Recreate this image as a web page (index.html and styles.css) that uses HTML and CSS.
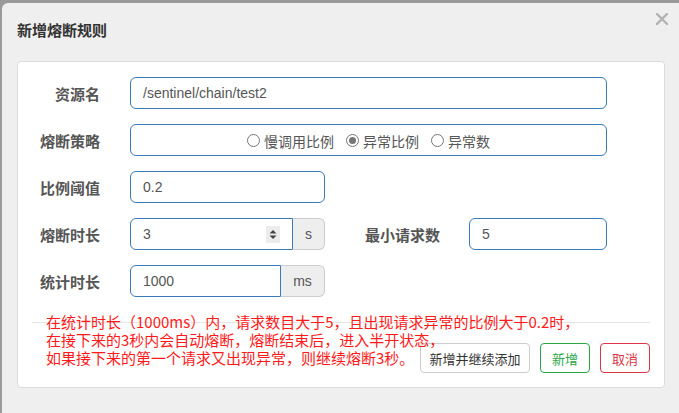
FILE: index.html
```html
<!DOCTYPE html>
<html lang="zh-CN">
<head>
<meta charset="utf-8">
<title>新增熔断规则</title>
<link rel="stylesheet" href="styles.css">
</head>
<body>
<div class="modal">
  <div class="modal-header">
    <h4 class="title">新增熔断规则</h4>
    <span class="close"><svg width="12" height="12" viewBox="0 0 12 12"><path d="M1 1L11 11M11 1L1 11" stroke="#b3b3b3" stroke-width="2.4" stroke-linecap="square"/></svg></span>
  </div>
  <div class="panel">
    <div class="form">
      <div class="row">
        <span class="lbl">资源名</span>
        <div class="ctl w-full">/sentinel/chain/test2</div>
      </div>
      <div class="row">
        <span class="lbl">熔断策略</span>
        <div class="ctl w-full radios">
          <span class="radio"><i class="dot"></i>慢调用比例</span>
          <span class="radio"><i class="dot on"></i>异常比例</span>
          <span class="radio"><i class="dot"></i>异常数</span>
        </div>
      </div>
      <div class="row">
        <span class="lbl">比例阈值</span>
        <div class="ctl w-half">0.2</div>
      </div>
      <div class="row">
        <span class="lbl">熔断时长</span>
        <div class="group">
          <div class="ctl in-group spin">3
            <svg class="spinner" width="14" height="17" viewBox="0 0 14 17"><rect width="14" height="17" fill="#ececec"/><path d="M3.5 7.5L7 4L10.5 7.5Z" fill="#444"/><path d="M3.5 9.5L7 13L10.5 9.5Z" fill="#444"/></svg>
          </div>
          <div class="addon addon-s">s</div>
        </div>
        <span class="lbl lbl2">最小请求数</span>
        <div class="ctl w-min">5</div>
      </div>
      <div class="row">
        <span class="lbl">统计时长</span>
        <div class="group">
          <div class="ctl in-group">1000</div>
          <div class="addon addon-ms">ms</div>
        </div>
      </div>
    </div>
    <div class="footer">
      <p class="hint">在统计时长（1000ms）内，请求数目大于5，且出现请求异常的比例大于0.2时，<br>在接下来的3秒内会自动熔断，熔断结束后，进入半开状态，<br>如果接下来的第一个请求又出现异常，则继续熔断3秒。</p>
      <button class="btn btn-default">新增并继续添加</button>
      <button class="btn btn-ok">新增</button>
      <button class="btn btn-cancel">取消</button>
    </div>
  </div>
</div>
</body>
</html>
```
FILE: styles.css
```css
html, body {
  margin: 0;
  padding: 0;
}
body {
  background: #9a9a9a;
  overflow: hidden;
  height: 413px;
  font-family: "Noto Sans CJK SC", "Liberation Sans", sans-serif;
}
.modal {
  margin: 3px 0 0 2px;
  width: 678px;
  height: 420px;
  box-sizing: border-box;
  padding: 0 15px;
  background: #efefef;
  border-radius: 6px 0 0 0;
}
.modal-header {
  display: flex;
  align-items: center;
  height: 54px;
}
.title {
  margin: 0;
  font-size: 15px;
  font-weight: bold;
  color: #333;
  line-height: 20px;
}
.close {
  margin-left: auto;
  margin-right: -3px;
  align-self: flex-start;
  margin-top: 10px;
  display: flex;
}
.panel {
  margin-top: 4px;
  background: #fff;
  border: 1px solid #dcdcdc;
  border-radius: 4px;
  padding: 15px 0 14px;
}
.form {
  display: flex;
  flex-direction: column;
  gap: 15px;
}
.row {
  display: flex;
  align-items: center;
  height: 32px;
}
.lbl {
  width: 82px;
  margin-right: 30px;
  text-align: right;
  font-size: 15px;
  font-weight: bold;
  color: #555;
  white-space: nowrap;
}
.lbl2 {
  width: 115px;
  margin-right: 29px;
}
.ctl {
  height: 32px;
  box-sizing: border-box;
  border: 1px solid #3a7ab8;
  border-radius: 6px;
  padding: 0 12px;
  display: flex;
  align-items: center;
  font-family: "Liberation Sans", Arial, sans-serif;
  font-size: 14px;
  color: #555;
}
.w-full { width: 477px; }
.w-half { width: 195px; }
.w-min { width: 138px; }
.group {
  display: flex;
  width: 195px;
}
.in-group {
  flex: 1;
  border-radius: 6px 0 0 6px;
}
.spin {
  justify-content: space-between;
}
.addon {
  height: 32px;
  box-sizing: border-box;
  border: 1px solid #ccc;
  border-left: none;
  border-radius: 0 6px 6px 0;
  background: #eee;
  display: flex;
  align-items: center;
  justify-content: center;
  font-family: "Liberation Sans", Arial, sans-serif;
  font-size: 14px;
  color: #555;
}
.addon-s { width: 32px; }
.addon-ms { width: 44px; }
.radios {
  justify-content: center;
  gap: 12px;
  font-family: "Noto Sans CJK SC", sans-serif;
  font-size: 14px;
  color: #555;
  padding-top: 1px;
}
.radio {
  display: flex;
  align-items: center;
  gap: 4px;
}
.dot {
  width: 11px;
  height: 11px;
  border: 1px solid #767676;
  border-radius: 50%;
  display: inline-flex;
  align-items: center;
  justify-content: center;
  box-sizing: content-box;
}
.dot.on::after {
  content: "";
  width: 7px;
  height: 7px;
  border-radius: 50%;
  background: #767676;
}
.footer {
  position: relative;
  margin: 25px 14px 0;
  border-top: 1px solid #e5e5e5;
  padding-top: 20px;
  display: flex;
  justify-content: flex-end;
  gap: 10px;
}
.hint {
  position: absolute;
  top: -10px;
  left: 14px;
  margin: 0;
  font-size: 15px;
  line-height: 18px;
  color: #ff1a1a;
  white-space: nowrap;
}
.btn {
  height: 30px;
  box-sizing: border-box;
  border: 1px solid #ccc;
  border-radius: 4px;
  background: #fff;
  font-family: "Noto Sans CJK SC", sans-serif;
  font-size: 13px;
  padding: 0;
  color: #333;
}
.btn-default { width: 110px; }
.btn-ok { width: 50px; border-color: #28a745; color: #28a745; }
.btn-cancel { width: 50px; border-color: #dc3545; color: #dc3545; }
```
